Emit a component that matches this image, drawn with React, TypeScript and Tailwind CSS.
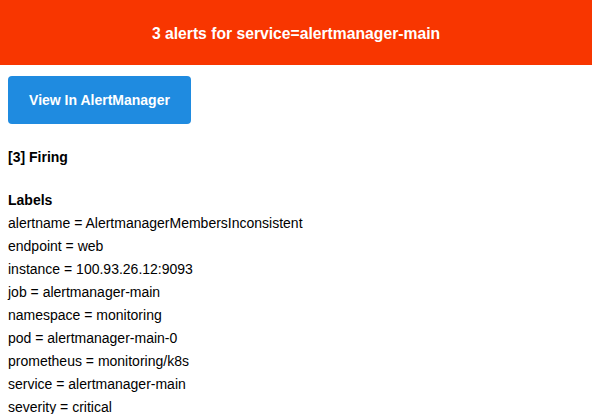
export default function App() {
  const labels = [
    "alertname = AlertmanagerMembersInconsistent",
    "endpoint = web",
    "instance = 100.93.26.12:9093",
    "job = alertmanager-main",
    "namespace = monitoring",
    "pod = alertmanager-main-0",
    "prometheus = monitoring/k8s",
    "service = alertmanager-main",
    "severity = critical",
  ];
  return (
    <div className="min-h-screen bg-white font-['Liberation_Sans',Arial,sans-serif] text-[14px] text-black">
      <div className="flex h-[65px] items-center justify-center bg-[#f83600] pt-[3px] text-[15.7px] font-bold text-white">
        3 alerts for service=alertmanager-main
      </div>
      <div className="px-2 pt-[11px]">
        <a className="flex h-12 w-[183px] items-center justify-center rounded bg-[#1f8be0] pt-px text-[14px] font-bold text-white">
          View In AlertManager
        </a>
        <p className="mt-[22px] font-bold leading-[23px]">[3] Firing</p>
        <p className="mt-[20px] font-bold leading-[23px]">Labels</p>
        {labels.map((l) => (
          <p key={l} className="leading-[23px]">{l}</p>
        ))}
      </div>
    </div>
  );
}
